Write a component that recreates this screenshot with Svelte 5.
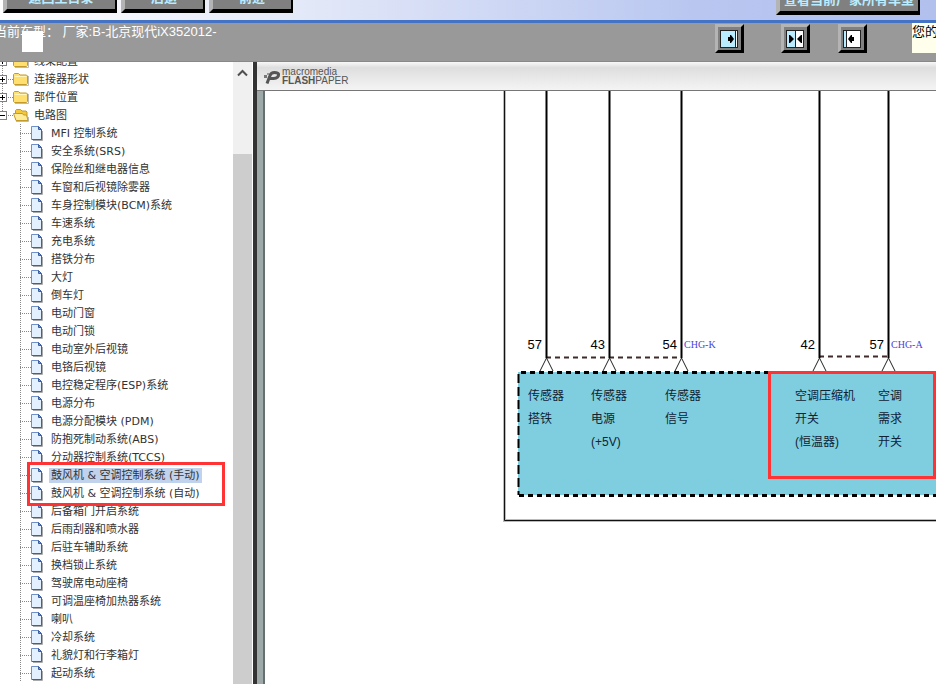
<script lang="ts">
    interface Pin {
        x: number
        labelX: number
        num: string
        tag?: string
        lines: string[]
    }

    const folders = ['线束配置', '连接器形状', '部件位置']
    const circuits = [
        'MFI 控制系统',
        '安全系统(SRS)',
        '保险丝和继电器信息',
        '车窗和后视镜除雾器',
        '车身控制模块(BCM)系统',
        '车速系统',
        '充电系统',
        '搭铁分布',
        '大灯',
        '倒车灯',
        '电动门窗',
        '电动门锁',
        '电动室外后视镜',
        '电铬后视镜',
        '电控稳定程序(ESP)系统',
        '电源分布',
        '电源分配模块 (PDM)',
        '防抱死制动系统(ABS)',
        '分动器控制系统(TCCS)',
        '鼓风机 & 空调控制系统 (手动)',
        '鼓风机 & 空调控制系统 (自动)',
        '后备箱门开启系统',
        '后雨刮器和喷水器',
        '后驻车辅助系统',
        '换档锁止系统',
        '驾驶席电动座椅',
        '可调温座椅加热器系统',
        '喇叭',
        '冷却系统',
        '礼貌灯和行李箱灯',
        '起动系统'
    ]
    const pins: Pin[] = [
        { x: 281, labelX: 263, num: '57', lines: ['传感器', '搭铁'] },
        { x: 344, labelX: 326, num: '43', lines: ['传感器', '电源', '(+5V)'] },
        { x: 416, labelX: 400, num: '54', tag: 'CHG-K', lines: ['传感器', '信号'] },
        { x: 554, labelX: 530, num: '42', lines: ['空调压缩机', '开关', '(恒温器)'] },
        { x: 623, labelX: 613, num: '57', tag: 'CHG-A', lines: ['空调', '需求', '开关'] }
    ]

    let selected = $state(19)
    let open = $state(true)
</script>

<div class="app">
    <header>
        <button type="button" class="wide">返回主目录</button>
        <button type="button">后退</button>
        <button type="button">前进</button>
        <button type="button" class="models">查看当前厂家所有车型</button>
    </header>

    <div class="infobar">
        <p>当前车型： 厂家:B-北京现代iX352012-</p>
        <span class="blank"></span>
        <div class="layout-buttons">
            <button type="button" aria-label="展开目录">
                <svg viewBox="0 0 18 18">
                    <rect x="0.5" y="0.5" width="17" height="17" fill="#b9ecff" stroke="#222" />
                    <path d="M15 1h2v16h-2z" fill="#fff" />
                    <path d="M15.5 1v16" stroke="#222" fill="none" />
                    <path d="M8 7h2V5h1l3 4-3 4h-1v-2H8z" />
                </svg>
            </button>
            <button type="button" class="split" aria-label="左右分栏">
                <svg viewBox="0 0 18 18">
                    <rect x="0.5" y="0.5" width="17" height="17" fill="#fff" stroke="#222" />
                    <path d="M1 1h8v16H1z" fill="#b9ecff" />
                    <path d="M9.5 1v16" stroke="#222" />
                    <path d="M3 7V5h1l4 4-4 4H3zM16 5v8h-1l-4-4 4-4z" />
                </svg>
            </button>
            <button type="button" aria-label="收起目录">
                <svg viewBox="0 0 18 18">
                    <rect x="0.5" y="0.5" width="17" height="17" fill="#fff" stroke="#222" />
                    <path d="M1 1h2v16H1z" fill="#b9ecff" />
                    <path d="M3.5 1v16" stroke="#222" />
                    <path d="M11 7H9V5H8L5 9l3 4h1v-2h2z" />
                </svg>
            </button>
        </div>
        <div class="notice">您的</div>
    </div>

    <main>
        <nav>
            <ul class="tree">
                {#each folders as folder}
                    <li class="row root">
                        <button type="button" class="toggle" aria-label="展开">
                            <svg viewBox="0 0 7 7"><path d="M1 3.500h5M3.500 1v5" stroke="#000" /></svg>
                        </button>
                        <svg class="folder" viewBox="0 0 16 14">
                            <path d="M2 13.500h13.500V4" stroke="#bbb" fill="none" />
                            <path d="M.5 11.500v-9l1-1h4l1.500 1.500h6.500l1 1v7.500l-1 1h-12z" fill="#ffdf70" stroke="#c39a2c" />
                            <path d="M1.500 4.500h12" stroke="#fff6bd" />
                        </svg>
                        <a href="#folder">{folder}</a>
                    </li>
                {/each}
                <li class="row root last">
                    <button type="button" class="toggle" aria-label="折叠" onclick={() => (open = !open)}>
                        <svg viewBox="0 0 7 7"><path d={open ? 'M1 3.500h5' : 'M1 3.500h5M3.500 1v5'} stroke="#000" /></svg>
                    </button>
                    <svg class="folder" viewBox="0 0 16 14">
                        <path d="M3 13.500h12.500V9" stroke="#bbb" fill="none" />
                        <path d="M2.500 11.500v-9l1-1h4l1.500 1.500h4l1 1v8z" fill="#f3c83d" stroke="#c39a2c" />
                        <path d="M.5 5.500h9l1 1.500h3l1.500 5.500H3z" fill="#ffec9a" stroke="#c39a2c" />
                    </svg>
                    <a href="#folder">电路图</a>
                </li>
                {#if open}
                    {#each circuits as name, i}
                        <li class="row leaf">
                            <svg class="page" viewBox="0 0 12 15">
                                <path d="M2 14.500h9.500V5" stroke="#aaa" fill="none" />
                                <path d="M.5.5h7l3 3v10H.5z" fill="#e2f0ff" stroke="#6f8fca" />
                                <path d="M10.500 4v9.500H1" fill="none" stroke="#3f5f9f" />
                                <path d="M7.500.5v3h3z" fill="#7b9bd2" stroke="#3c5da0" />
                            </svg>
                            <a href="#circuit" class:selected={selected === i} onclick={() => (selected = i)}>{name}</a>
                            {#if i === 19}
                                <span class="mark"></span>
                            {/if}
                        </li>
                    {/each}
                {/if}
            </ul>
            <div class="scrollbar">
                <button type="button" aria-label="向上滚动">
                    <svg viewBox="0 0 11 8"><path d="M1 6.500l4.500-4.500L10 6.500" fill="none" stroke="#505050" stroke-width="2" /></svg>
                </button>
                <div class="thumb"></div>
            </div>
        </nav>

        <section class="viewer">
            <div class="brand">
                <svg viewBox="0 0 17 15">
                    <path d="M3 14.500l3-8q1-3 4.500-3t4 1.500q.5 4-5 4.500H5" fill="none" stroke="#555" stroke-width="3" />
                    <path d="M0 6h3v3H0z" fill="#777" />
                    <path d="M3 4h2v2H3z" fill="#999" />
                </svg>
                <div class="brand-name">
                    <span>macromedia</span>
                    <span><b>FLASH</b>PAPER</span>
                </div>
            </div>
            <div class="sheet">
                <svg class="diagram">
                    <!-- sheet frame -->
                    <path d="M239.500 0v429.500H2000" class="frame-shade" />
                    <path d="M239.500 0v429.500H2000" class="frame" />

                    <!-- control unit -->
                    <rect x="253" y="281" width="2000" height="123" fill="#7fcee0" />
                    <path d="M256 281.500H2000" class="edge" />
                    <path d="M254 404.500H2000" class="edge" />
                    <path d="M253.500 283v121" class="side" />

                    <path d="M281 266.500h135M554 265.500h69" class="link" />

                    {#each pins as pin}
                        <path d="M{pin.x + 0.5} 0v267" class="wire" />
                        <path d="M{pin.x - 6} 280l6.500-13 6.500 13" class="arrow" />
                        <text x={pin.x - 4} y="258" class="num">{pin.num}</text>
                        {#if pin.tag}
                            <text x={pin.x + 3} y="257" class="tag">{pin.tag}</text>
                        {/if}
                        {#each pin.lines as line, n}
                            <text x={pin.labelX} y={309 + n * 23} class="label">{line}</text>
                        {/each}
                    {/each}

                    <rect x="504.500" y="281.500" width="165" height="105" class="highlight" />
                </svg>
            </div>
        </section>
    </main>
</div>

<style>
    :global(body) {
        margin: 0;
    }
    .app {
        display: flex;
        flex-direction: column;
        height: 100vh;
        overflow: hidden;
        background: #fff;
        font-family: "Liberation Sans", "Noto Sans CJK SC", sans-serif;
        font-size: 13px;
    }
    button {
        box-sizing: border-box;
        padding: 0;
        font-family: inherit;
        cursor: pointer;
    }
    ul, p {
        margin: 0;
        padding: 0;
        list-style: none;
    }

    header {
        display: flex;
        flex: none;
        align-items: flex-end;
        gap: 4px;
        box-sizing: border-box;
        height: 23px;
        padding: 0 16px 7px 3px;
        overflow: hidden;
        border-bottom: 3px solid #4472c4;
        background: linear-gradient(to right, #fff, #e3e8f8 33%, #b8c6f0 75%, #b2c0ee);

        & button {
            flex: none;
            width: 84px;
            height: 28px;
            padding-bottom: 1px;
            border: solid #000;
            border-width: 3px 2px 4px 4px;
            border-color: #b4b4b4 #000 #000 #b4b4b4;
            background: #808080;
            color: #b9ecff;
            font-size: 13px;
            font-weight: bold;
            line-height: 16px;
        }
        & .wide {
            width: 114px;
        }
        & .models {
            width: 144px;
            margin: 0 0 -2px auto;
            white-space: nowrap;
        }
    }

    .infobar {
        position: relative;
        display: flex;
        flex: none;
        justify-content: space-between;
        box-sizing: border-box;
        height: 39px;
        border-bottom: 1px solid #888;
        background: #999;

        & p {
            margin-left: -6px;
            color: #fff;
            line-height: 17px;
            white-space: pre;
        }
    }
    .blank {
        position: absolute;
        top: 8px;
        left: 22px;
        width: 21px;
        height: 21px;
        background: #fff;
    }
    .layout-buttons {
        display: flex;
        gap: 28px;
        margin: 1px 45px 0 auto;

        & button {
            width: 29px;
            height: 29px;
            border: 3px solid;
            border-color: #b4b4b4 #000 #000 #b4b4b4;
            background: #808080;
        }
        & .split {
            margin-left: 9px;
        }
        & svg {
            display: block;
            width: 18px;
            height: 18px;
            margin: 2px;
        }
    }
    .notice {
        width: 24px;
        height: 30px;
        overflow: hidden;
        background: #ffffec;
        line-height: 17px;
        white-space: nowrap;
    }

    main {
        display: flex;
        flex: 1;
        min-height: 0;
    }
    nav {
        display: flex;
        flex: none;
        width: 253px;
        overflow: hidden;
    }
    .tree {
        flex: 1;
        margin-top: -10px;
        font-family: "DejaVu Sans", "Noto Sans CJK SC", sans-serif;
        font-size: 11px;

        & a {
            padding: 0 2px;
            color: #333;
            line-height: 15px;
            text-decoration: none;
            white-space: nowrap;
        }
        & .selected {
            background: #c0d2ec;
        }
    }
    .row {
        position: relative;
        display: flex;
        align-items: center;
        height: 18px;
    }
    .root {
        gap: 3px;
        background:
            repeating-linear-gradient(to bottom, #888 0 1px, transparent 1px 2px) 2px 0 / 1px 100% no-repeat,
            repeating-linear-gradient(to right, #888 0 1px, transparent 1px 2px) 0 9px / 13px 1px no-repeat;
    }
    .last {
        background:
            repeating-linear-gradient(to bottom, #888 0 1px, transparent 1px 2px) 2px 0 / 1px 9px no-repeat,
            repeating-linear-gradient(to right, #888 0 1px, transparent 1px 2px) 0 9px / 13px 1px no-repeat;
    }
    .leaf {
        gap: 6px;
        padding-left: 31px;
        background:
            repeating-linear-gradient(to bottom, #888 0 1px, transparent 1px 2px) 20px 0 / 1px 100% no-repeat,
            repeating-linear-gradient(to right, #888 0 1px, transparent 1px 2px) 20px 9px / 11px 1px no-repeat;
    }
    .toggle {
        flex: none;
        width: 9px;
        height: 9px;
        margin: 0 3px 0 -2px;
        border: 1px solid #808080;
        background: #fff;

        & svg {
            display: block;
            width: 7px;
            height: 7px;
        }
    }
    .folder {
        flex: none;
        width: 16px;
        height: 14px;
    }
    .page {
        flex: none;
        width: 12px;
        height: 15px;
    }
    .mark {
        position: absolute;
        top: -4px;
        left: 27px;
        z-index: 1;
        box-sizing: border-box;
        width: 198px;
        height: 44px;
        border: 3px solid #ff3333;
        pointer-events: none;
    }
    .scrollbar {
        display: flex;
        flex: none;
        flex-direction: column;
        width: 19px;
        margin-right: 1px;
        background: #f0f0f0;

        & button {
            height: 22px;
            border: none;
            background: none;
        }
        & svg {
            display: block;
            width: 11px;
            height: 8px;
            margin: 0 auto;
        }
    }
    .thumb {
        flex: 1;
        margin-top: 70px;
        background: #cdcdcd;
    }

    .viewer {
        display: flex;
        flex: 1;
        flex-direction: column;
        min-width: 0;
        border-left: 4px solid #333;
    }
    .brand {
        display: flex;
        flex: none;
        gap: 1px;
        align-items: center;
        box-sizing: border-box;
        height: 29px;
        padding-left: 7px;
        border-bottom: 1px solid #777;
        background: linear-gradient(#f8f8f8, #dedede 20%, #f4f4f4);

        & svg {
            width: 17px;
            height: 15px;
        }
    }
    .brand-name {
        display: flex;
        flex-direction: column;
        color: #555;
        font-size: 10px;
        line-height: 9px;
    }
    .sheet {
        flex: 1;
        min-height: 0;
        border-left: 2px solid #667070;
        padding-left: 0;
        background: #fff;
        box-shadow: -6px 0 #9eaaaa;
        margin-left: 6px;
        clip-path: inset(0 0 0 -6px);
    }
    .diagram {
        display: block;
        width: 100%;
        height: 100%;
    }
    .frame-shade {
        fill: none;
        stroke: #bbb;
        stroke-width: 3;
    }
    .frame {
        fill: none;
        stroke: #111;
        stroke-width: 1;
    }
    .edge {
        stroke: #000;
        stroke-width: 3;
        stroke-dasharray: 5 4;
    }
    .side {
        stroke: #000;
        stroke-width: 2;
        stroke-dasharray: 9 4;
    }
    .link {
        stroke: #402a2a;
        stroke-width: 2;
        stroke-dasharray: 5 4;
    }
    .wire {
        stroke: #000;
        stroke-width: 2;
    }
    .arrow {
        fill: #fff;
        stroke: #222;
        stroke-width: 1;
    }
    .num {
        font-size: 13px;
        text-anchor: end;
    }
    .tag {
        fill: #4a43d8;
        font-family: "Liberation Serif", serif;
        font-size: 10px;
    }
    .label {
        fill: #123;
        font-size: 12px;
    }
    .highlight {
        fill: none;
        stroke: #ff3333;
        stroke-width: 3;
    }
</style>
